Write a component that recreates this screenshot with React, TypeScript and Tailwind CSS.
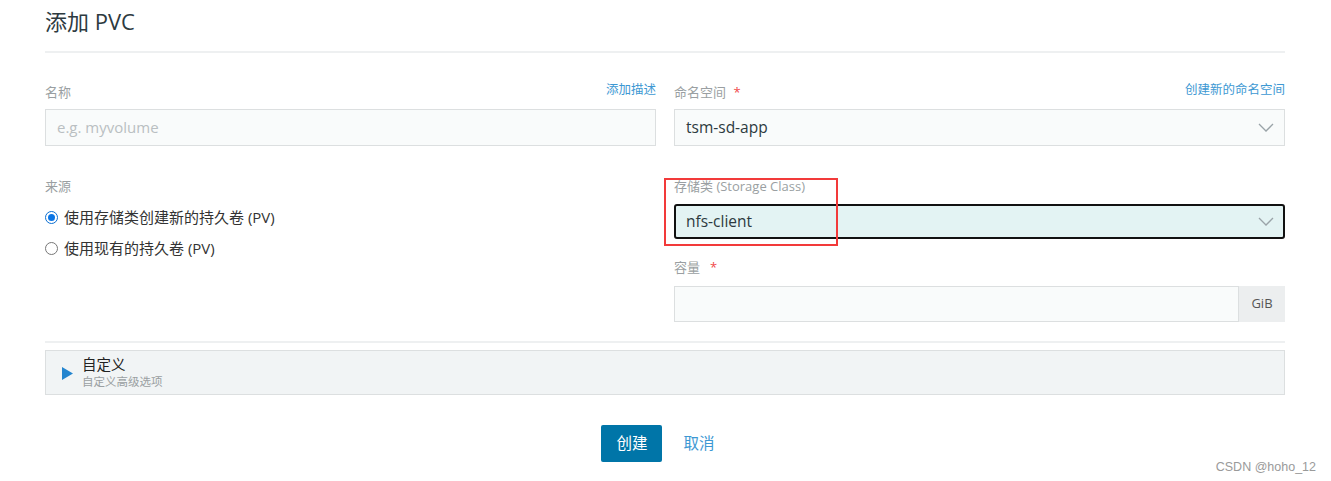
import React from "react";

const font = { fontFamily: '"Open Sans", "Noto Sans CJK SC", sans-serif' };

function Chevron() {
  return (
    <svg width="16" height="9" viewBox="0 0 16 9" fill="none" className="shrink-0">
      <path d="M1 1 L8 8 L15 1" stroke="#9aa3a8" strokeWidth="1.3" />
    </svg>
  );
}

export default function App() {
  return (
    <div className="w-[1331px] h-[481px] bg-white relative overflow-hidden" style={font}>
      <div className="pl-[45px] pr-[46px]">
        <div className="h-[42px] flex items-center text-[22px] text-[#2d3a40]">添加 PVC</div>
        <div className="mt-[9px] h-[2px] bg-[#eef0f1]" />

        <div className="mt-[30px] grid grid-cols-2 gap-x-[18px]">
          {/* left column */}
          <div className="flex flex-col">
            <div className="h-[20px] flex items-center justify-between">
              <span className="text-[13px] text-[#9a9fa2]">名称</span>
              <span className="text-[12.5px] text-[#3d98d3] -mt-[6px]">添加描述</span>
            </div>
            <div className="mt-[6px] h-[37px] border border-[#dcdfe0] bg-[#f9fbfb] flex items-center px-[11px] text-[15px] text-[#b9bfc2]">
              e.g. myvolume
            </div>

            <div className="mt-[31px] h-[20px] flex items-center text-[13px] text-[#9a9fa2]">来源</div>
            <div className="mt-[10px] h-[20px] flex items-center gap-[6px] text-[15px] text-[#333]">
              <span className="w-[13px] h-[13px] rounded-full border border-[#0a6ed1] flex items-center justify-center">
                <span className="w-[7px] h-[7px] rounded-full bg-[#0a75e5]" />
              </span>
              <span>使用存储类创建新的持久卷 (PV)</span>
            </div>
            <div className="mt-[11px] h-[20px] flex items-center gap-[6px] text-[15px] text-[#333]">
              <span className="w-[13px] h-[13px] rounded-full border border-[#777]" />
              <span>使用现有的持久卷 (PV)</span>
            </div>
          </div>

          {/* right column */}
          <div className="flex flex-col">
            <div className="h-[20px] flex items-center justify-between">
              <span className="text-[13px] text-[#9a9fa2]">
                命名空间 <span className="text-[#f04a4a] ml-[4px]">*</span>
              </span>
              <span className="text-[12.5px] text-[#3d98d3] -mt-[6px]">创建新的命名空间</span>
            </div>
            <div className="mt-[6px] h-[37px] border border-[#dcdfe0] bg-[#f9fbfb] flex items-center justify-between pl-[11px] pr-[10px] text-[15.5px] text-[#2d3a40]">
              <span>tsm-sd-app</span>
              <Chevron />
            </div>

            <div className="relative mt-[31px]">
              <div className="h-[20px] flex items-center text-[13px] text-[#9a9fa2]">存储类 (Storage Class)</div>
              <div className="mt-[7px] h-[35px] border-2 border-[#111] rounded-[3px] bg-[#e3f3f3] flex items-center justify-between pl-[10px] pr-[9px] text-[15.5px] text-[#2d3a40]">
                <span>nfs-client</span>
                <Chevron />
              </div>
              <div className="absolute left-[-10px] top-[1px] w-[174px] h-[68px] border-2 border-[#f23a3a] pointer-events-none" />
            </div>

            <div className="mt-[19px] h-[20px] flex items-center text-[13px] text-[#9a9fa2]">
              容量 <span className="text-[#f04a4a] ml-[10px]">*</span>
            </div>
            <div className="mt-[8px] h-[36px] flex">
              <div className="flex-1 border border-[#dcdfe0] bg-[#f9fbfb]" />
              <div className="w-[46px] bg-[#eceeef] flex items-center justify-center text-[13px] text-[#555]">GiB</div>
            </div>
          </div>
        </div>

        <div className="mt-[19px] h-[2px] bg-[#eef0f1]" />

        <div className="mt-[7px] h-[45px] border border-[#dcdfe0] bg-[#f1f4f5] flex items-center pl-[16px] gap-[9px]">
          <svg width="11" height="13" viewBox="0 0 11 13" className="mt-[1px]">
            <path d="M0 0 L11 6.5 L0 13 Z" fill="#2485cf" />
          </svg>
          <div className="flex flex-col">
            <span className="text-[14.5px] leading-[18px] text-[#222]">自定义</span>
            <span className="text-[11.5px] leading-[16px] text-[#9a9fa2]">自定义高级选项</span>
          </div>
        </div>

        <div className="mt-[30px] flex items-center justify-center gap-[21px] pr-[14px]">
          <div className="w-[61px] h-[37px] bg-[#0075a8] rounded-[2px] flex items-center justify-center text-[15.5px] text-white">创建</div>
          <div className="text-[15.5px] text-[#3d98d3]">取消</div>
        </div>
      </div>

      <div
        className="absolute right-[15px] top-[458px] text-[12.5px] text-[#9a9a9a]"
        style={{ fontFamily: '"Liberation Sans", Arial, sans-serif' }}
      >
        CSDN @hoho_12
      </div>
    </div>
  );
}
